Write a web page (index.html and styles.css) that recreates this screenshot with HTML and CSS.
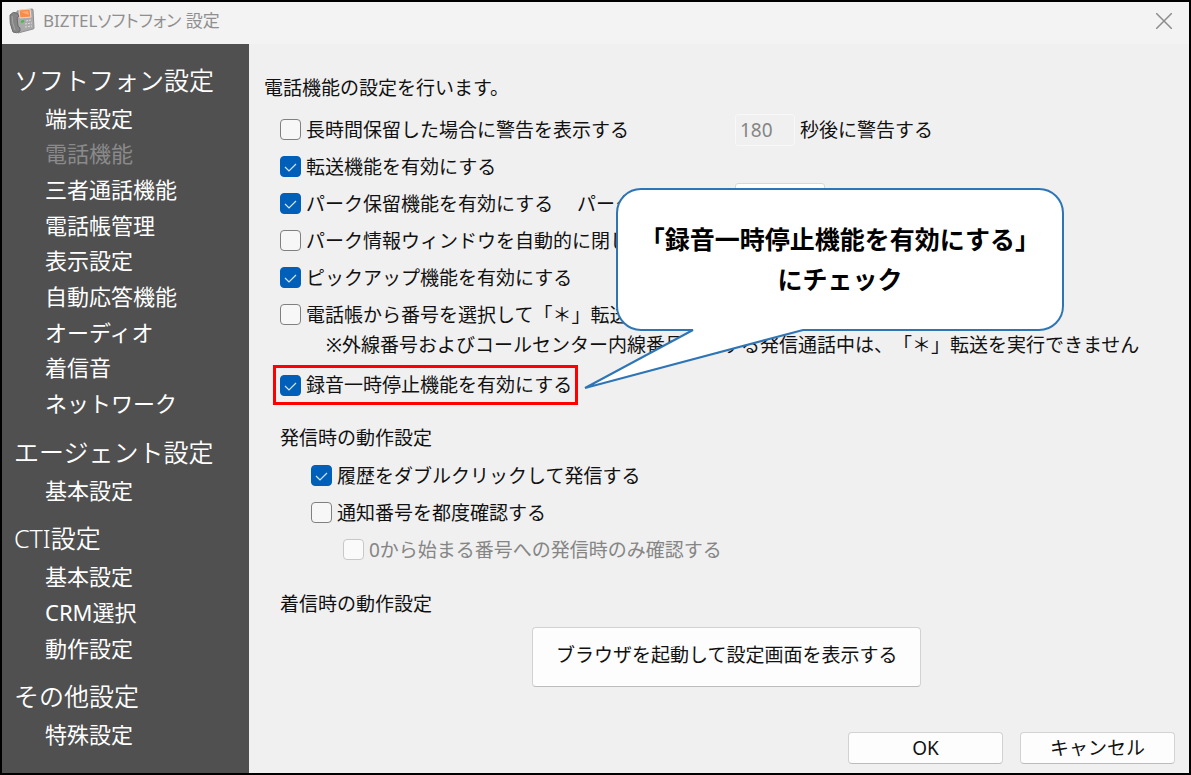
FILE: index.html
```html
<!DOCTYPE html>
<html lang="ja">
<head>
    <meta charset="UTF-8">
    <title>BIZTELソフトフォン 設定</title>
    <meta name="viewport" content="width=device-width, initial-scale=1">
    <link rel="stylesheet" href="styles.css">
</head>
<body>
<div class="window">
    <header class="titlebar">
        <svg class="app-icon" viewBox="0 0 26 26" width="26" height="26" aria-hidden="true">
            <path d="M8 3 L23 1 Q24 1 24 2 L25 20 Q25 21 24 21 L9 25 Z" fill="#aaa" stroke="#8e8e8e"/>
            <path d="M1 7 Q4 3 8 5 L10 8 L8 10 L9 18 L11 20 L11 23 Q8 26 4 24 Q0 15 1 7Z" fill="#858585" stroke="#6c6c6c"/>
            <path d="M3 8 Q3 15 6 22" fill="none" stroke="#a5a5a5"/>
            <path d="M10 2 L21 1 L22 9 L11 10Z" fill="#f98b48" stroke="#ddd"/>
            <path d="M12 4 L19 3 L20 7Z" fill="#ffab78"/>
            <path d="M12 14 L15 13" stroke="#35c535" stroke-width="2"/>
            <path d="M17 13 L22 12 M16 16 L23 15 M16 19 L23 18" stroke="#ddd" stroke-dasharray="2 1"/>
        </svg>
        <h1>BIZTELソフトフォン 設定</h1>
        <button type="button" class="close" aria-label="閉じる">
            <svg viewBox="0 0 16 16" width="16" height="16"><path d="M0 0 L16 16 M16 0 L0 16" stroke="#8c8c8c" stroke-width="1.5"/></svg>
        </button>
    </header>
    <div class="body">
        <nav class="sidebar">
            <h2>ソフトフォン設定</h2>
            <a href="#">端末設定</a>
            <a href="#" class="current">電話機能</a>
            <a href="#">三者通話機能</a>
            <a href="#">電話帳管理</a>
            <a href="#">表示設定</a>
            <a href="#">自動応答機能</a>
            <a href="#">オーディオ</a>
            <a href="#">着信音</a>
            <a href="#">ネットワーク</a>
            <h2>エージェント設定</h2>
            <a href="#">基本設定</a>
            <h2>CTI設定</h2>
            <a href="#">基本設定</a>
            <a href="#">CRM選択</a>
            <a href="#">動作設定</a>
            <h2>その他設定</h2>
            <a href="#">特殊設定</a>
        </nav>
        <main class="content">
            <p class="intro">電話機能の設定を行います。</p>
            <div class="options">
                <div class="row cols">
                    <label class="check wide"><input type="checkbox">長時間保留した場合に警告を表示する</label>
                    <label class="unit"><input type="text" class="text short" value="180" disabled>秒後に警告する</label>
                </div>
                <div class="row"><label class="check"><input type="checkbox" checked>転送機能を有効にする</label></div>
                <div class="row cols">
                    <label class="check"><input type="checkbox" checked>パーク保留機能を有効にする</label>
                    <label for="park">パーク番号</label>
                    <input type="text" class="text" id="park">
                </div>
                <div class="row"><label class="check"><input type="checkbox">パーク情報ウィンドウを自動的に閉じる</label></div>
                <div class="row"><label class="check"><input type="checkbox" checked>ピックアップ機能を有効にする</label></div>
                <div class="row"><label class="check"><input type="checkbox">電話帳から番号を選択して「＊」転送する</label></div>
                <p class="note">※外線番号およびコールセンター内線番号に対する発信通話中は、「＊」転送を実行できません</p>
                <div class="row highlight"><label class="check"><input type="checkbox" checked>録音一時停止機能を有効にする</label></div>

                <h3>発信時の動作設定</h3>
                <div class="row level2"><label class="check"><input type="checkbox" checked>履歴をダブルクリックして発信する</label></div>
                <div class="row level2"><label class="check"><input type="checkbox">通知番号を都度確認する</label></div>
                <div class="row level3"><label class="check off"><input type="checkbox" disabled>0から始まる番号への発信時のみ確認する</label></div>

                <h3>着信時の動作設定</h3>
                <button type="button" class="btn browser">ブラウザを起動して設定画面を表示する</button>
            </div>
            <footer class="actions">
                <button type="button" class="btn">OK</button>
                <button type="button" class="btn">キャンセル</button>
            </footer>

            <div class="callout">
                <svg viewBox="0 0 482 202" width="482" height="202" aria-hidden="true">
                    <path d="M58 2 H456 A24 24 0 0 1 480 26 V119 A24 24 0 0 1 456 143 H220 L2 201 L110 143 H58 A24 24 0 0 1 34 119 V26 A24 24 0 0 1 58 2Z" fill="#fff" stroke="#2e75b6" stroke-width="2"/>
                </svg>
                <p>「録音一時停止機能を有効にする」<br>にチェック</p>
            </div>
        </main>
    </div>
</div>
</body>
</html>
```

FILE: styles.css
```css
*{ margin:0; padding:0; box-sizing:border-box; }
body{ font:19px/30px "Noto Sans","Noto Sans CJK JP",sans-serif; color:#111; background:#f0f0f0; text-spacing-trim:space-all; }
h1,h2,h3{ font-weight:normal; }
a{ text-decoration:none; }
input,button{ font:inherit; color:inherit; }
.window{ display:flex; flex-direction:column; min-height:100vh; border:2px solid #000; }

/* title bar */
.titlebar{ display:flex; align-items:center; gap:8px; height:42px; padding:0 17px 4px 7px; background:#f3f3f3; color:#8f8f8f; }
.titlebar h1{ font-size:17px; font-feature-settings:"palt"; }
.close{ display:flex; margin-left:auto; border:0; background:none; }

.body{ display:flex; flex:1; }

/* sidebar */
.sidebar{ display:flex; flex-direction:column; flex:none; width:247px; padding:16px 12px 21px; background:#505050; color:#fff; }
.sidebar h2{ font-size:25px; line-height:40px; font-weight:350; }
.sidebar a + h2{ margin-top:11px; }
.sidebar a{ display:flex; flex:1; align-items:center; padding-left:31px; font-size:22px; color:#fff; }
.sidebar .current{ color:#8a8a8a; }

/* settings */
.content{ position:relative; display:flex; flex-direction:column; flex:1; padding:29px 14px 9px 15px; }
.options{ padding:8px 0 0 16px; }
.row{ display:flex; align-items:center; height:37px; }
.cols{ display:grid; grid-template-columns:297px 158px 1fr; align-content:center; }
.check{ display:flex; align-items:center; gap:5px; white-space:nowrap; }
.wide{ grid-column:span 2; }
.check input{ appearance:none; flex:none; width:21px; height:21px; border:1px solid #808080; border-radius:4px; background:#f7f7f7; }
.check input:checked{ border-color:#005fb8; background:#005fb8 url("data:image/svg+xml,%3Csvg xmlns='http://www.w3.org/2000/svg' viewBox='0 0 19 19'%3E%3Cpath d='M4 10l4 4 7-7' fill='none' stroke='%23d5e5f5' stroke-width='1.2'/%3E%3C/svg%3E"); }
.check input:disabled{ border-color:#c8c8c8; background:#fafafa; }
.off{ color:#858585; }
.unit{ display:flex; align-items:center; gap:5px; }
.text{ width:90px; height:42px; padding:0 4px; border:1px solid #d8d8d8; border-radius:3px; background:#fff; }
.short{ width:60px; height:32px; }
.text:disabled{ border-color:#f8f8f8; background:#f0f0f0; color:#858585; }
.note{ padding-left:46px; line-height:24px; white-space:nowrap; }
.highlight{ width:max-content; height:40px; margin:8px 0 15px -7px; padding:0 3px 0 4px; border:3px solid #f00; }
.options h3{ font-size:19px; line-height:37px; }
.level2{ padding-left:31px; }
.level3{ padding-left:63px; margin-bottom:18px; }
.btn{ border:1px solid #d2d2d2; border-bottom-color:#bcbcbc; border-radius:4px; background:#fdfdfd; }
.browser{ display:block; height:60px; margin:4px 0 0 252px; padding:0 23px 4px; }
.actions{ display:flex; justify-content:flex-end; gap:17px; margin-top:auto; }
.actions .btn{ width:155px; height:32px; line-height:28px; }

/* balloon laid over the form, tail points at the framed option */
.callout{ position:absolute; top:143px; left:334px; }
.callout svg{ display:block; }
.callout p{ position:absolute; top:32px; left:34px; width:446px; font-size:25px; line-height:40px; font-weight:bold; text-align:center; color:#000; }
```
